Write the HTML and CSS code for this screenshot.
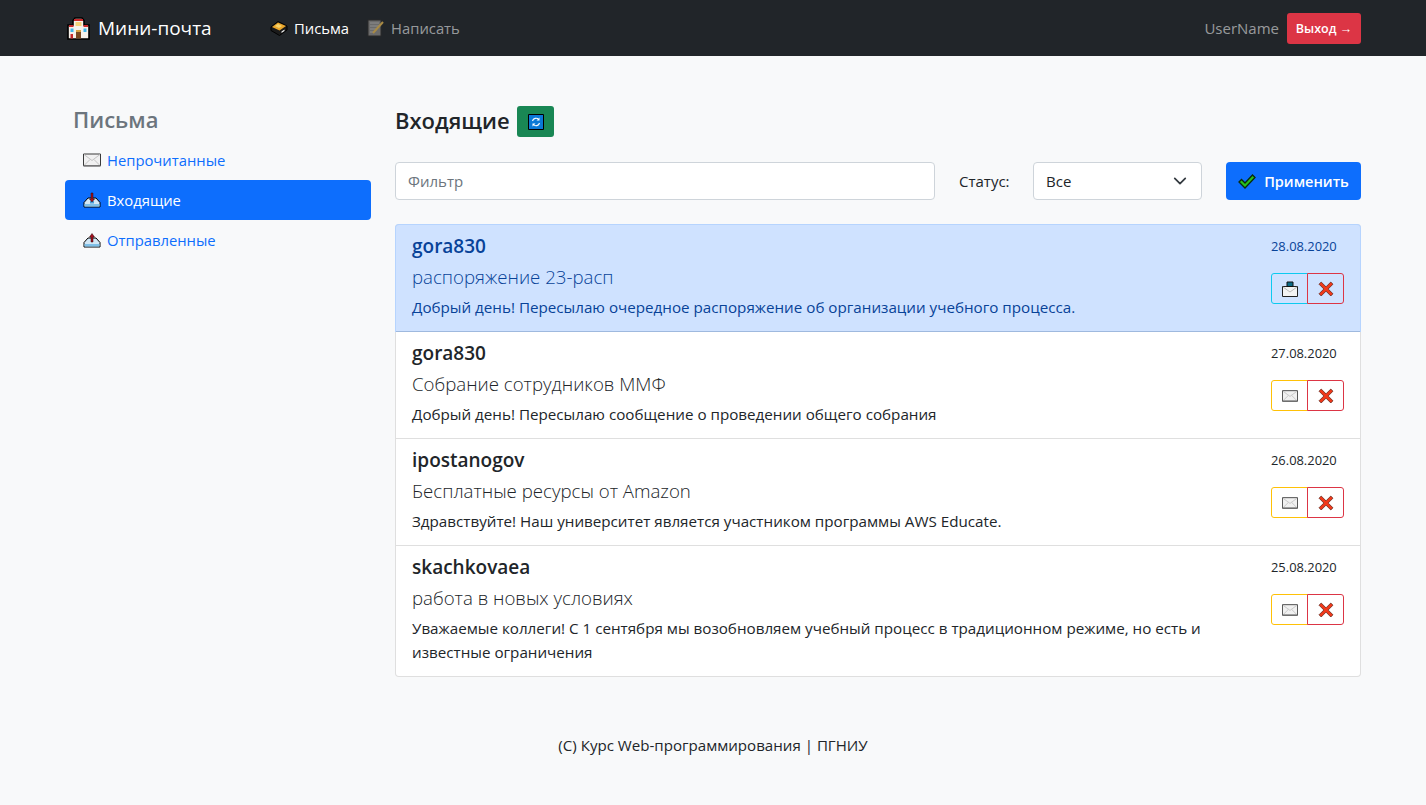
FILE: index.html
```html
<!DOCTYPE html>
<html lang="ru">
<head>
    <meta charset="UTF-8">
    <meta name="viewport" content="width=device-width, initial-scale=1.0">
    <title>Мини-почта</title>
    <link rel="stylesheet" href="styles.css">
</head>
<body>

<!-- Icon set -->
<svg class="icon-defs" width="0" height="0">
    <defs>
        <symbol id="i-school" viewBox="0 0 23 23">
            <path d="M1 8h5V3.500L8 1h7l2 2.500V8h5v14H1z" fill="#f6f1ea" stroke="#000" stroke-width="1.600"/>
            <path d="M2 8h4.500v2H2zM16.500 8H21v2h-4.500zM7 2h9v2H7z" fill="#c8292b"/>
            <path d="M8.500 5h6v4h-6z" fill="#f4d27a"/>
            <path d="M3.500 11.500h3v3.500h-3zM16.500 11.500h3v3.500h-3z" fill="#3fb6ea"/>
            <path d="M9 13h5v8.500H9z" fill="#7a4a22"/>
            <path d="M9 13h5v2H9z" fill="#d9a441"/>
            <path d="M3.500 17h2.500v4.500H3.500z" fill="#c8292b"/>
        </symbol>
        <symbol id="i-inbox-tray" viewBox="0 0 18 17">
            <path d="M1 7.500L8 2l9 4.500v4L9.500 16 1 11z" fill="#1a1a1a" stroke="#000"/>
            <path d="M2 7.500L8 3l8 3.500-6.500 4.500z" fill="#e9a62c"/>
            <path d="M5 6.500l3-2 4 2-3 2z" fill="#f6d36b"/>
            <path d="M11.500 12l3-2v1.500l-3 2z" fill="#eee"/>
        </symbol>
        <symbol id="i-note" viewBox="0 0 18 18">
            <path d="M1 1h13v16H1z" fill="#6b6b6b" stroke="#2a2a2a"/>
            <path d="M3 4h9M3 7h9M3 10h6M3 13h4" stroke="#8f8f8f" stroke-width="1"/>
            <path d="M6 14l10-11" stroke="#a88a44" stroke-width="2"/>
        </symbol>
        <symbol id="i-envelope" viewBox="0 0 18 13">
            <path d="M.5.5h17v12H.5z" fill="#f1f1f1" stroke="#3a3a3a"/>
            <path d="M1 1l8 6 8-6M1 12l6-6M17 12l-6-6" fill="none" stroke="#c4c4c4" stroke-width="1"/>
            <path d="M1 12h16" stroke="#777"/>
        </symbol>
        <symbol id="i-inbox" viewBox="0 0 18 16">
            <path d="M1 10.500L5 6h8l4 4.500V15H1z" fill="#d3e8f6" stroke="#000"/>
            <path d="M1.500 12h15v2.500h-15z" fill="#7fc0e8"/>
            <path d="M7 9h4v2.500H7z" fill="#4a9ed8"/>
            <path d="M8 1h2v6h1.500L9 10 6.500 7H8z" fill="#a5101f" stroke="#2a0a0a" stroke-width=".5"/>
        </symbol>
        <symbol id="i-outbox" viewBox="0 0 18 16">
            <path d="M1 10.500L5 6h8l4 4.500V15H1z" fill="#d3e8f6" stroke="#000"/>
            <path d="M1.500 12h15v2.500h-15z" fill="#7fc0e8"/>
            <path d="M8 10V5H6.500L9 1.500 11.500 5H10v5z" fill="#a5101f" stroke="#2a0a0a" stroke-width=".5"/>
        </symbol>
        <symbol id="i-refresh" viewBox="0 0 16 16">
            <path d="M.5.5h15v15H.5z" fill="#0a78d6" stroke="#000"/>
            <path d="M4.500 7a3.600 3.600 0 0 1 6.200-1.500M11.500 9a3.600 3.600 0 0 1-6.200 1.500" fill="none" stroke="#fff" stroke-width="1.100"/>
            <path d="M11.500 3.500v3H8.500zM4.500 12.500v-3h3z" fill="#fff"/>
        </symbol>
        <symbol id="i-check" viewBox="0 0 18 15">
            <path d="M1 8l2.500-2.500L7 9l7.500-8L17 3.500 7 14z" fill="#27c11c" stroke="#0b2a0b" stroke-width="1.300"/>
        </symbol>
        <symbol id="i-cross" viewBox="0 0 16 16">
            <path d="M1 3.200L3.200 1 8 5.800 12.800 1 15 3.200 10.200 8 15 12.800 12.800 15 8 10.200 3.200 15 1 12.800 5.800 8z" fill="#f0391a" stroke="#3a0d05" stroke-width=".6"/>
        </symbol>
        <symbol id="i-open" viewBox="0 0 16 16">
            <path d="M.5 5.500h15v10H.5z" fill="#f3f3f3" stroke="#222"/>
            <path d="M1 6l7 5 7-5" fill="none" stroke="#bbb"/>
            <path d="M5 1h6v4.500H5z" fill="#0b6a86" stroke="#111"/>
        </symbol>
    </defs>
</svg>

<nav class="navbar">
    <div class="container navbar-inner">
        <a class="brand" href="#"><svg class="brand-icon"><use href="#i-school"/></svg>Мини-почта</a>
        <ul class="nav-menu">
            <li><a class="nav-link active" href="#"><svg class="nav-icon"><use href="#i-inbox-tray"/></svg>Письма</a></li>
            <li><a class="nav-link" href="#"><svg class="nav-icon"><use href="#i-note"/></svg>Написать</a></li>
        </ul>
        <div class="user-box">
            <span class="user-name">UserName</span>
            <a class="btn-logout" href="#">Выход →</a>
        </div>
    </div>
</nav>

<div class="container content">
    <aside class="sidebar">
        <h4 class="sidebar-title">Письма</h4>
        <a class="side-link" href="#"><svg class="side-icon"><use href="#i-envelope"/></svg>Непрочитанные</a>
        <a class="side-link active" href="#"><svg class="side-icon"><use href="#i-inbox"/></svg>Входящие</a>
        <a class="side-link" href="#"><svg class="side-icon"><use href="#i-outbox"/></svg>Отправленные</a>
    </aside>

    <main class="main">
        <div class="main-head">
            <h4 class="main-title">Входящие</h4>
            <button class="btn-refresh"><svg class="refresh-icon"><use href="#i-refresh"/></svg></button>
        </div>

        <form class="filter-row">
            <input class="field filter-input" type="text" placeholder="Фильтр">
            <label class="filter-label">Статус:</label>
            <div class="field select-box">
                <span>Все</span>
                <svg class="chevron" viewBox="0 0 16 16"><path d="M2 5l6 6 6-6" fill="none" stroke="#343a40" stroke-width="2" stroke-linecap="round" stroke-linejoin="round"/></svg>
            </div>
            <button class="btn-apply" type="button"><svg class="check-icon"><use href="#i-check"/></svg>Применить</button>
        </form>

        <div class="mail-list">
            <div class="mail-item active">
                <div class="mail-body">
                    <h5 class="mail-from">gora830</h5>
                    <h5 class="mail-subject">распоряжение 23-расп</h5>
                    <p class="mail-text">Добрый день! Пересылаю очередное распоряжение об организации учебного процесса.</p>
                </div>
                <div class="mail-side">
                    <small class="mail-date">28.08.2020</small>
                    <div class="btn-group">
                        <button class="btn-mark info"><svg class="mark-icon"><use href="#i-open"/></svg></button>
                        <button class="btn-mark danger"><svg class="mark-icon"><use href="#i-cross"/></svg></button>
                    </div>
                </div>
            </div>
            <div class="mail-item">
                <div class="mail-body">
                    <h5 class="mail-from">gora830</h5>
                    <h5 class="mail-subject">Собрание сотрудников ММФ</h5>
                    <p class="mail-text">Добрый день! Пересылаю сообщение о проведении общего собрания</p>
                </div>
                <div class="mail-side">
                    <small class="mail-date">27.08.2020</small>
                    <div class="btn-group">
                        <button class="btn-mark warning"><svg class="mark-icon"><use href="#i-envelope"/></svg></button>
                        <button class="btn-mark danger"><svg class="mark-icon"><use href="#i-cross"/></svg></button>
                    </div>
                </div>
            </div>
            <div class="mail-item">
                <div class="mail-body">
                    <h5 class="mail-from">ipostanogov</h5>
                    <h5 class="mail-subject">Бесплатные ресурсы от Amazon</h5>
                    <p class="mail-text">Здравствуйте! Наш университет является участником программы AWS Educate.</p>
                </div>
                <div class="mail-side">
                    <small class="mail-date">26.08.2020</small>
                    <div class="btn-group">
                        <button class="btn-mark warning"><svg class="mark-icon"><use href="#i-envelope"/></svg></button>
                        <button class="btn-mark danger"><svg class="mark-icon"><use href="#i-cross"/></svg></button>
                    </div>
                </div>
            </div>
            <div class="mail-item">
                <div class="mail-body">
                    <h5 class="mail-from">skachkovaea</h5>
                    <h5 class="mail-subject">работа в новых условиях</h5>
                    <p class="mail-text">Уважаемые коллеги! С 1 сентября мы возобновляем учебный процесс в традиционном режиме, но есть и известные ограничения</p>
                </div>
                <div class="mail-side">
                    <small class="mail-date">25.08.2020</small>
                    <div class="btn-group">
                        <button class="btn-mark warning"><svg class="mark-icon"><use href="#i-envelope"/></svg></button>
                        <button class="btn-mark danger"><svg class="mark-icon"><use href="#i-cross"/></svg></button>
                    </div>
                </div>
            </div>
        </div>
    </main>
</div>

<footer class="footer">(C) Курс Web-программирования | ПГНИУ</footer>

</body>
</html>
```

FILE: styles.css
```css
/* General Styles */
* {
    box-sizing: border-box;
}

body {
    font-family: "Open Sans", "Noto Sans", Arial, sans-serif;
    font-size: 15px;
    line-height: 24px;
    color: #212529;
    background-color: #f8f9fa;
    margin: 0;
}

a {
    text-decoration: none;
}

.icon-defs {
    display: block;
    height: 0;
}

.container {
    width: 1320px;
    margin: 0 auto;
    padding: 0 12px;
}

/* Navbar */
.navbar {
    height: 56px;
    background-color: #212529;
}

.navbar-inner {
    display: flex;
    align-items: center;
    height: 56px;
}

.brand {
    display: flex;
    align-items: center;
    margin-left: 2px;
    width: 203px;
    font-size: 19px;
    color: white;
}

.brand-icon {
    width: 23px;
    height: 23px;
    margin-right: 8px;
}

.nav-menu {
    display: flex;
    gap: 18px;
    list-style: none;
    margin: 0;
    padding: 0;
    flex: 1;
}

.nav-link {
    display: flex;
    align-items: center;
    font-size: 14.800px;
    color: rgba(255, 255, 255, 0.55);
}

.nav-link.active {
    font-weight: 500;
    color: white;
}

.nav-icon {
    width: 18px;
    height: 18px;
    margin-right: 6px;
}

.user-box {
    display: flex;
    align-items: center;
}

.user-name {
    color: rgba(255, 255, 255, 0.55);
    margin-right: 8px;
}

.btn-logout {
    display: block;
    width: 74px;
    height: 31px;
    line-height: 31px;
    text-align: center;
    font-size: 12.500px;
    font-weight: 600;
    color: white;
    background-color: #dc3545;
    border-radius: 3px;
}

/* Layout */
.content {
    display: flex;
    gap: 24px;
    padding-top: 48px;
}

.sidebar {
    width: 306px;
    flex-shrink: 0;
}

.main {
    flex: 1;
    min-width: 0;
}

.sidebar-title {
    margin: 0 0 0 8px;
    height: 36px;
    line-height: 30px;
    font-size: 22px;
    font-weight: 600;
    color: #6c757d;
}

.side-link {
    display: flex;
    align-items: center;
    height: 40px;
    padding-left: 18px;
    font-size: 14.800px;
    color: #0d6efd;
    border-radius: 4px;
}

.side-link.active {
    color: white;
    background-color: #0d6efd;
}

.side-icon {
    width: 18px;
    height: 16px;
    margin-right: 6px;
}

/* Heading */
.main-head {
    display: flex;
    align-items: center;
    height: 31px;
    margin: 2px 0 25px;
}

.main-title {
    width: 115px;
    margin: 0 7px 0 0;
    padding-bottom: 3px;
    font-size: 22px;
    font-weight: 600;
    white-space: nowrap;
}

.btn-refresh {
    display: flex;
    align-items: center;
    justify-content: center;
    width: 37px;
    height: 31px;
    padding: 0;
    border: none;
    border-radius: 3px;
    background-color: #198754;
}

.refresh-icon {
    width: 16px;
    height: 16px;
}

/* Filter */
.filter-row {
    display: flex;
    align-items: center;
    margin-bottom: 24px;
}

.field {
    height: 38px;
    padding: 0 12px;
    font-family: inherit;
    font-size: 15px;
    color: #212529;
    background-color: white;
    border: 1px solid #ced4da;
    border-radius: 4px;
}

.field::placeholder {
    color: #6c757d;
}

.filter-input {
    width: 540px;
}

.filter-label {
    margin-left: 24px;
    width: 74px;
}

.select-box {
    display: flex;
    align-items: center;
    justify-content: space-between;
    width: 169px;
}

.chevron {
    width: 14px;
    height: 14px;
    margin-right: 2px;
}

.btn-apply {
    display: flex;
    align-items: center;
    justify-content: center;
    margin-left: 24px;
    width: 135px;
    height: 38px;
    padding: 0;
    font-family: inherit;
    font-size: 14.500px;
    font-weight: 600;
    color: white;
    background-color: #0d6efd;
    border: none;
    border-radius: 4px;
}

.check-icon {
    width: 18px;
    height: 15px;
    margin-right: 8px;
}

/* Mail list */
.mail-list {
    background-color: white;
    border: 1px solid rgba(0, 0, 0, 0.125);
    border-radius: 4px;
}

.mail-item {
    display: flex;
    padding: 9px 16px 7px;
    border-top: 1px solid rgba(0, 0, 0, 0.125);
}

.mail-item:first-child {
    border-top: none;
    border-radius: 3px 3px 0 0;
}

.mail-item.active {
    color: #084298;
    background-color: #cfe2ff;
    box-shadow: 0 0 0 1px #b6d4fe;
}

.mail-body {
    flex: 1;
    min-width: 0;
    padding-right: 60px;
}

.mail-from {
    margin: 0 0 4px;
    font-size: 19px;
    line-height: 24px;
    font-weight: 600;
}

.mail-subject {
    margin: 0 0 3px;
    font-size: 18.650px;
    line-height: 30px;
    font-weight: 300;
}

.mail-text {
    margin: 0 0 5px;
    font-size: 15.200px;
}

.mail-side {
    width: 73px;
    flex-shrink: 0;
}

.mail-date {
    display: block;
    height: 39px;
    font-size: 12.900px;
    line-height: 24px;
}

.btn-group {
    display: flex;
}

.btn-mark {
    display: flex;
    align-items: center;
    justify-content: center;
    width: 37px;
    height: 31px;
    padding: 0;
    background: transparent;
    border: 1px solid;
    border-radius: 3px 0 0 3px;
}

.btn-mark.danger {
    margin-left: -1px;
    border-color: #dc3545;
    border-radius: 0 3px 3px 0;
}

.btn-mark.info {
    border-color: #0dcaf0;
}

.btn-mark.warning {
    border-color: #ffc107;
}

.mark-icon {
    width: 16px;
    height: 16px;
}

/* Footer */
.footer {
    margin-top: 56px;
    padding-bottom: 47px;
    text-align: center;
    font-size: 15.100px;
}
```
